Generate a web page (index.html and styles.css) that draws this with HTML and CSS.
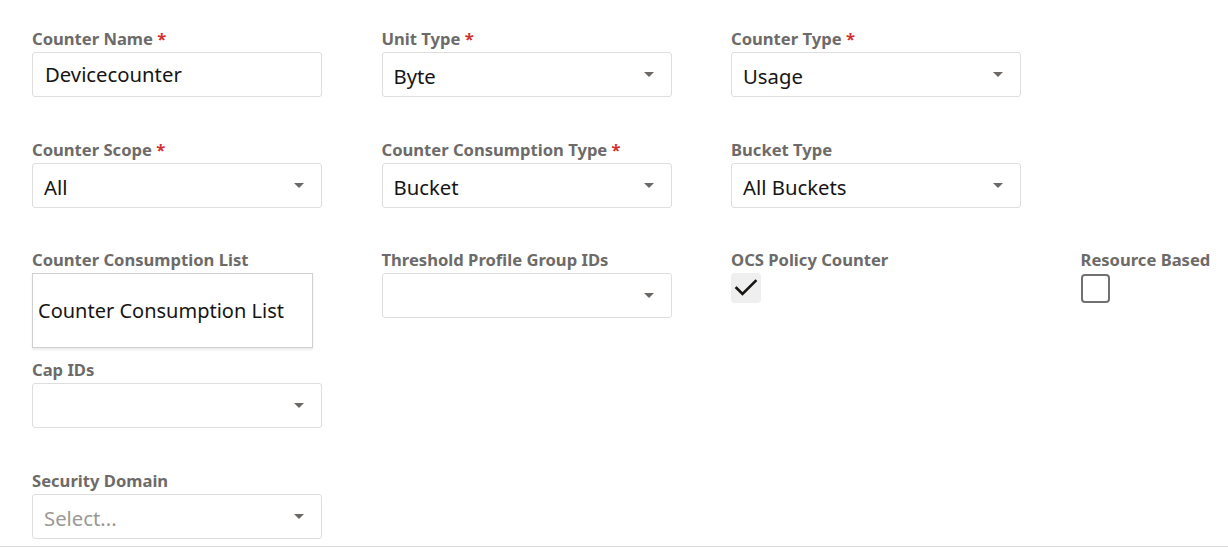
FILE: index.html
```html
<!DOCTYPE html>
<html lang="en">
<head>
<meta charset="utf-8">
<title>Counter</title>
<link rel="stylesheet" href="styles.css">
</head>
<body>
<div class="form">
  <div class="field">
    <label class="label">Counter Name <span class="req">*</span></label>
    <div class="input text"><span class="value">Devicecounter</span></div>
  </div>
  <div class="field">
    <label class="label">Unit Type <span class="req">*</span></label>
    <div class="input select"><span class="value">Byte</span><span class="arrow"></span></div>
  </div>
  <div class="field">
    <label class="label">Counter Type <span class="req">*</span></label>
    <div class="input select"><span class="value">Usage</span><span class="arrow"></span></div>
  </div>
  <div class="field"></div>

  <div class="field">
    <label class="label">Counter Scope <span class="req">*</span></label>
    <div class="input select"><span class="value">All</span><span class="arrow"></span></div>
  </div>
  <div class="field">
    <label class="label">Counter Consumption Type <span class="req">*</span></label>
    <div class="input select"><span class="value">Bucket</span><span class="arrow"></span></div>
  </div>
  <div class="field">
    <label class="label">Bucket Type</label>
    <div class="input select"><span class="value">All Buckets</span><span class="arrow"></span></div>
  </div>
  <div class="field"></div>

  <div class="field">
    <label class="label">Counter Consumption List</label>
    <div class="listbox"><span class="value list-value">Counter Consumption List</span></div>
  </div>
  <div class="field">
    <label class="label">Threshold Profile Group IDs</label>
    <div class="input select"><span class="value"></span><span class="arrow"></span></div>
  </div>
  <div class="field">
    <label class="label">OCS Policy Counter</label>
    <div class="check checked">
      <svg width="26" height="22" viewBox="0 0 26 22"><path d="M3.5 11 L9.5 17 L22.5 4" fill="none" stroke="#161513" stroke-width="2.6" stroke-linecap="square"/></svg>
    </div>
  </div>
  <div class="field">
    <label class="label">Resource Based</label>
    <div class="check empty"></div>
  </div>

  <div class="field">
    <label class="label">Cap IDs</label>
    <div class="input select"><span class="value"></span><span class="arrow"></span></div>
  </div>
  <div class="field"></div>
  <div class="field"></div>
  <div class="field"></div>

  <div class="field">
    <label class="label">Security Domain</label>
    <div class="input select"><span class="value placeholder">Select...</span><span class="arrow"></span></div>
  </div>
</div>
</body>
</html>
```

FILE: styles.css
```css
html, body {
  margin: 0;
  padding: 0;
  background: #ffffff;
  overflow: hidden;
}
body {
  font-family: "Noto Sans", "Open Sans", sans-serif;
  width: 1228px;
  height: 547px;
}
.form {
  box-sizing: border-box;
  height: 547px;
  padding: 28px 0 7px 32px;
  border-bottom: 1px solid #dcdcdc;
  display: grid;
  grid-template-columns: 290px 290px 290px 1fr;
  grid-template-rows: 111px 110px 110px 111px auto;
  column-gap: 59.5px;
}
.field {
  display: flex;
  flex-direction: column;
  align-items: flex-start;
}
.label {
  font-size: 16.6px;
  line-height: 20px;
  font-weight: 700;
  color: #6d6b69;
  padding-top: 1px;
  margin-bottom: 3px;
  white-space: nowrap;
}
.req {
  color: #d32f2f;
}
.input {
  box-sizing: border-box;
  width: 290px;
  height: 45px;
  border: 1px solid #dedede;
  border-radius: 3px;
  display: flex;
  align-items: center;
  padding: 0 17px 0 11px;
}
.input.text {
  padding-left: 12px;
  padding-bottom: 2px;
}
.input.select {
  padding-top: 3px;
}
.input.select .arrow {
  margin-top: -3px;
}
.value {
  flex: 1;
  font-size: 20.3px;
  color: #161513;
  white-space: nowrap;
}
.list-value {
  font-size: 20px;
}
.placeholder {
  color: #9b9896;
}
.arrow {
  width: 0;
  height: 0;
  border-left: 5px solid transparent;
  border-right: 5px solid transparent;
  border-top: 5px solid #6b6866;
}
.listbox {
  box-sizing: border-box;
  width: 281px;
  height: 75px;
  border: 1px solid #d0d0d0;
  box-shadow: 0 2px 2px rgba(0, 0, 0, 0.08);
  display: flex;
  align-items: center;
  padding: 0 5px;
}
.check {
  box-sizing: border-box;
  width: 30px;
  height: 30px;
  border-radius: 4px;
  display: flex;
  align-items: center;
  justify-content: center;
}
.check.checked {
  background: #efefef;
}
.check.empty {
  border: 2px solid #737070;
  width: 29px;
  height: 29px;
  margin-top: 1px;
}
```
